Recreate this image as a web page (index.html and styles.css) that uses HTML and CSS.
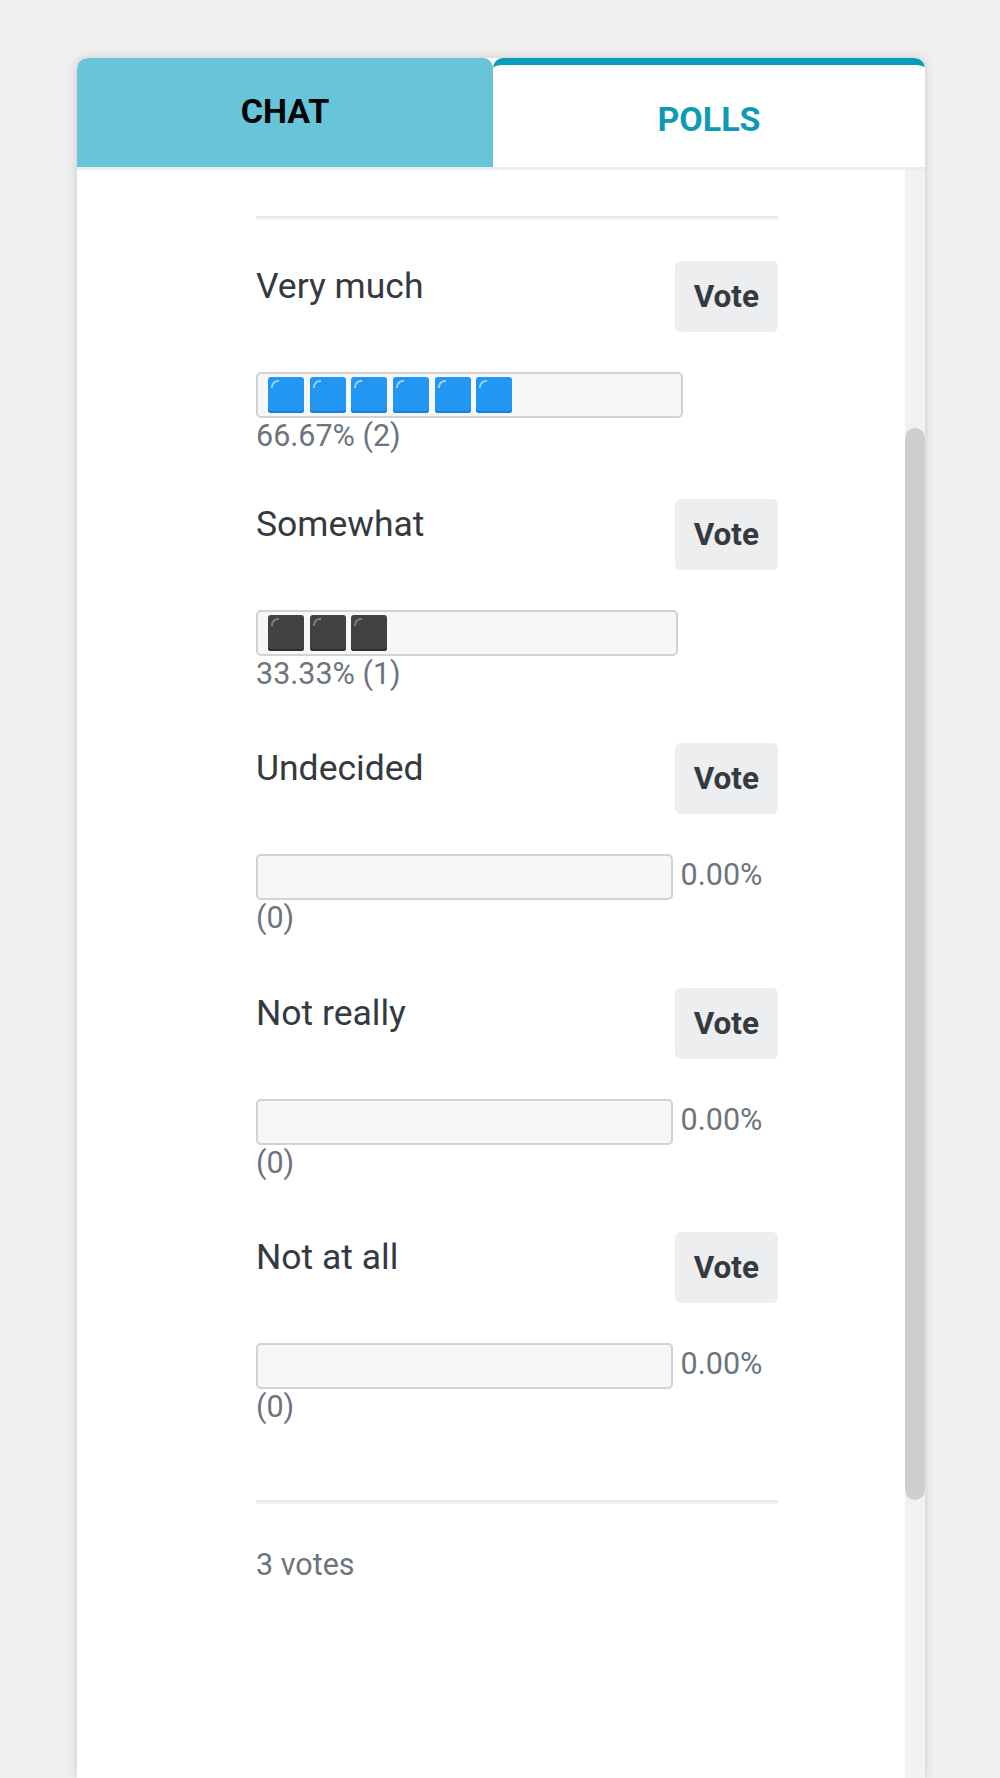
FILE: index.html
```html
<!DOCTYPE html>
<html lang="en">
<head>
<meta charset="utf-8">
<title>Polls</title>
<link rel="stylesheet" href="styles.css">
</head>
<body>
<div class="card">
  <div class="tabs">
    <div class="tab tab-chat">CHAT</div>
    <div class="tab tab-polls">POLLS</div>
  </div>
  <div class="body">
    <div class="pane">
      <div class="poll">
        <div class="rule"></div>

        <div class="option option-first">
          <div class="option-head">
            <div class="label">Very much</div>
            <button class="vote">Vote</button>
          </div>
          <div class="result"><span class="bar bar-w6"><i class="sq sq-blue"></i><i class="sq sq-blue"></i><i class="sq sq-blue"></i><i class="sq sq-blue"></i><i class="sq sq-blue"></i><i class="sq sq-blue"></i></span> 66.67% (2)</div>
        </div>

        <div class="option option-second">
          <div class="option-head">
            <div class="label">Somewhat</div>
            <button class="vote">Vote</button>
          </div>
          <div class="result"><span class="bar bar-w3"><i class="sq sq-black"></i><i class="sq sq-black"></i><i class="sq sq-black"></i></span> 33.33% (1)</div>
        </div>

        <div class="option">
          <div class="option-head">
            <div class="label">Undecided</div>
            <button class="vote">Vote</button>
          </div>
          <div class="result"><span class="bar"></span> 0.00% (0)</div>
        </div>

        <div class="option">
          <div class="option-head">
            <div class="label">Not really</div>
            <button class="vote">Vote</button>
          </div>
          <div class="result"><span class="bar"></span> 0.00% (0)</div>
        </div>

        <div class="option">
          <div class="option-head">
            <div class="label">Not at all</div>
            <button class="vote">Vote</button>
          </div>
          <div class="result"><span class="bar"></span> 0.00% (0)</div>
        </div>

        <div class="rule rule-foot"></div>
        <div class="total">3 votes</div>
      </div>
    </div>
    <div class="scrollbar"><div class="thumb"></div></div>
  </div>
</div>
</body>
</html>
```
FILE: styles.css
```css
html, body {
  margin: 0;
  padding: 0;
}
body {
  background: #efefef;
  font-family: "Roboto", "Noto Sans", sans-serif;
  height: 1778px;
  overflow: hidden;
}
.card {
  margin: 58px 0 0 77px;
  width: 848px;
  height: 1720px;
  background: #ffffff;
  border-radius: 10px 10px 0 0;
  box-shadow: 0 0 10px rgba(0, 0, 0, 0.16);
  display: flex;
  flex-direction: column;
  overflow: hidden;
}
.tabs {
  display: flex;
  height: 109px;
  border-bottom: 3px solid #ececec;
  flex: 0 0 auto;
}
.tab {
  box-sizing: border-box;
  height: 109px;
  display: flex;
  align-items: center;
  justify-content: center;
  font-size: 34px;
  font-weight: 700;
  border-radius: 10px 10px 0 0;
}
.tab-chat {
  flex: 0 0 416px;
  background: #68c5d9;
  color: #050505;
  padding-bottom: 3px;
}
.tab-polls {
  flex: 1 1 auto;
  background: #ffffff;
  color: #0f9ab4;
  border-top: 7px solid #079cb8;
  padding-top: 6px;
}
.body {
  flex: 1 1 auto;
  display: flex;
  min-height: 0;
}
.pane {
  flex: 1 1 auto;
  background: #ffffff;
  padding-left: 179px;
}
.poll {
  width: 522px;
  padding-top: 46px;
}
.rule {
  border-top: 2px solid #e8e8e8;
  border-bottom: 2px solid #f2f2f2;
}
.option {
  margin-top: 49px;
}
.option-first {
  margin-top: 39px;
}
.option-second {
  margin-top: 42px;
}
.option-head {
  display: flex;
  justify-content: space-between;
  align-items: flex-start;
}
.label {
  font-size: 35.5px;
  line-height: 54px;
  color: #343a40;
}
.vote {
  margin-top: 2px;
  border: none;
  border-radius: 6px;
  background: #edeef0;
  color: #343a40;
  font-family: "Roboto", "Noto Sans", sans-serif;
  font-weight: 700;
  font-size: 31.5px;
  line-height: 47px;
  padding: 12px 19px;
}
.result {
  margin-top: 40px;
  font-size: 30.5px;
  line-height: 1.2;
  color: #6c757d;
}
.bar {
  box-sizing: border-box;
  display: inline-flex;
  align-items: center;
  gap: 5.7px;
  vertical-align: middle;
  width: 417px;
  height: 46px;
  padding: 0 10px;
  background: #f7f7f7;
  border: 2px solid #d2d2d2;
  border-radius: 5px;
}
.bar-w6 {
  width: 427px;
}
.bar-w3 {
  width: 422px;
}
.sq {
  position: relative;
  display: block;
  flex: 0 0 36px;
  width: 36px;
  height: 36px;
  border-radius: 3px;
}
.sq::before {
  content: "";
  position: absolute;
  top: 3px;
  left: 3px;
  width: 6px;
  height: 6px;
  border-top: 2px solid;
  border-left: 2px solid;
  border-top-left-radius: 7px;
}
.sq-blue {
  background: #2196f3;
  box-shadow: inset 0 -2px 0 #1a7fd2;
}
.sq-blue::before {
  border-color: #9fd0f8;
}
.sq-black {
  background: #424242;
  box-shadow: inset 0 -2px 0 #2f2f2f;
}
.sq-black::before {
  border-color: #7e7e7e;
}
.rule-foot {
  margin-top: 74px;
}
.total {
  margin-top: 38px;
  font-size: 30.5px;
  line-height: 1.5;
  color: #6c757d;
}
.scrollbar {
  flex: 0 0 20px;
  width: 20px;
  background: #f2f2f0;
  padding-top: 258px;
  box-sizing: border-box;
}
.thumb {
  width: 20px;
  height: 1072px;
  border-radius: 10px;
  background: #cececc;
}
```
